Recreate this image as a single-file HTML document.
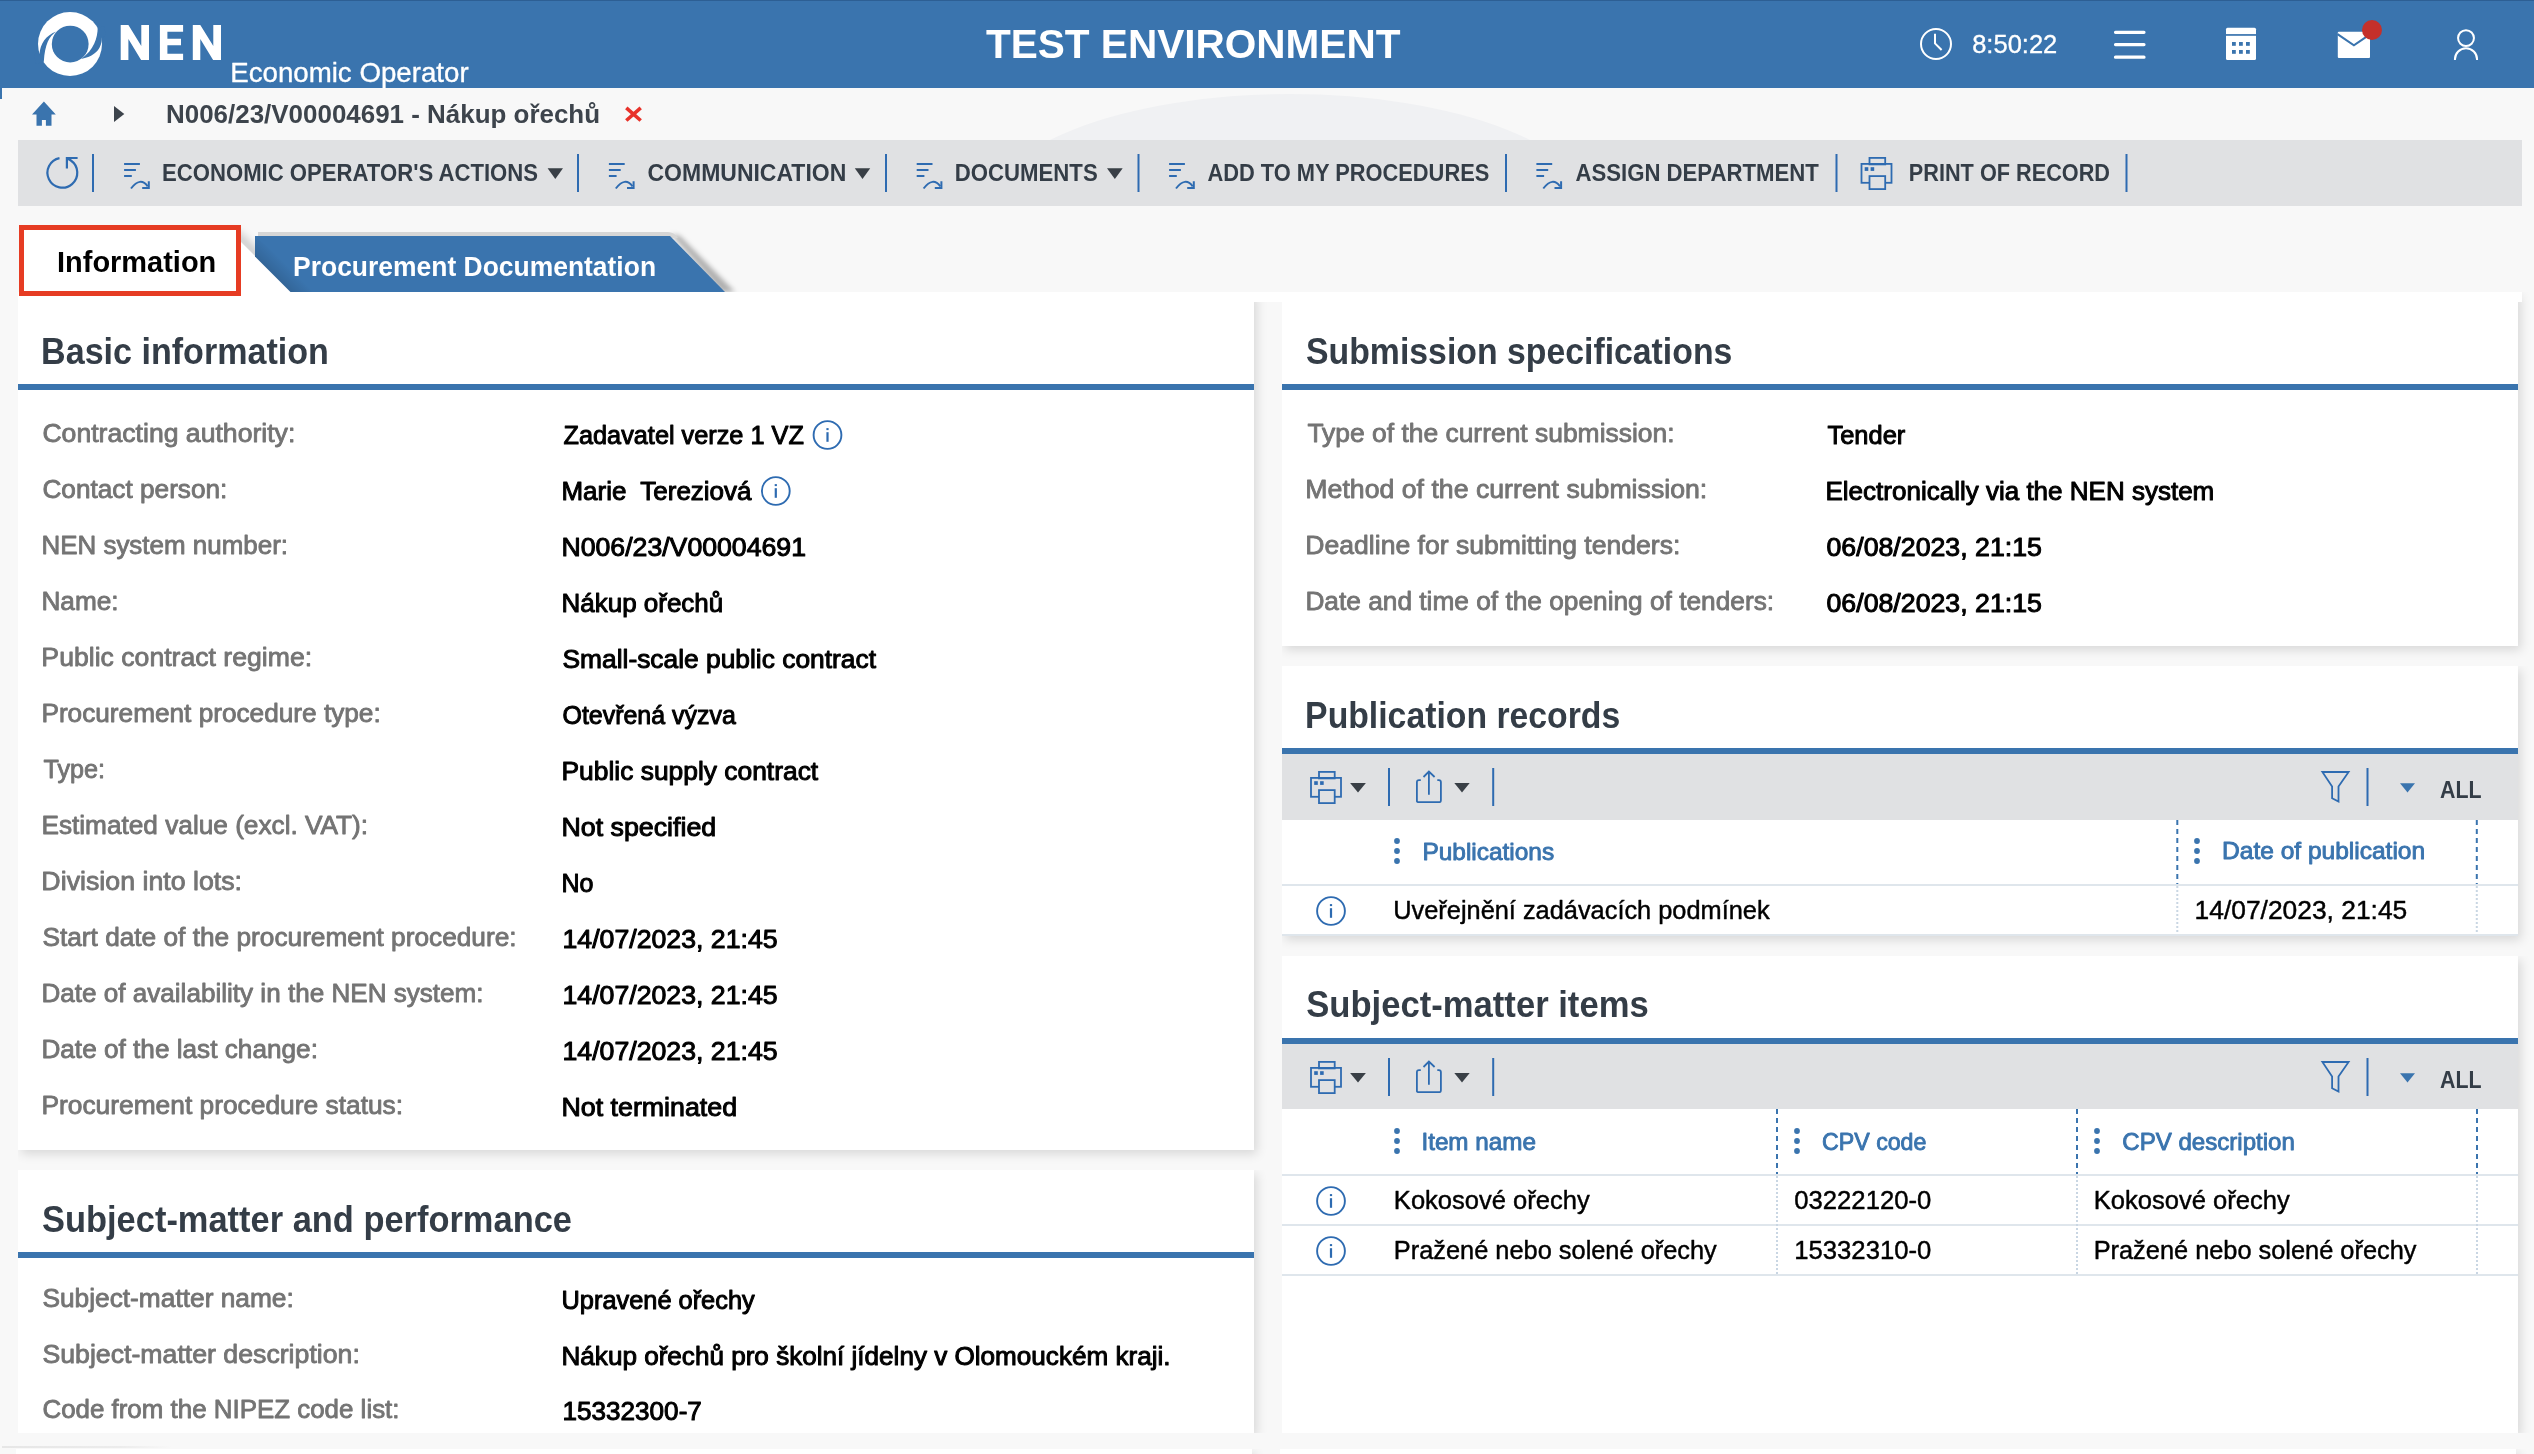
<!DOCTYPE html><html><head><meta charset="utf-8"><title>NEN</title><style>
html,body{margin:0;padding:0;width:2534px;height:1454px;overflow:hidden;background:#f8f8f8;font-family:'Liberation Sans',sans-serif}
.a{position:absolute}
#ov{position:absolute;left:0;top:0;font-family:'Liberation Sans',sans-serif;will-change:transform}
.card{position:absolute;background:#fff;box-shadow:3px 4px 10px rgba(0,0,0,0.13);clip-path:inset(0 -30px -30px 0)}
</style></head><body><div class="a" style="left:0px;top:0px;width:2534px;height:88px;background:#3a74ae"></div>
<div class="a" style="left:0px;top:0px;width:2534px;height:1px;background:#2d5f94"></div>
<div class="a" style="left:0px;top:88px;width:2px;height:11px;background:#3a74ae"></div>
<div class="a" style="left:985px;top:94px;width:610px;height:240px;border-radius:50%;background:#f0f1f3;clip-path:inset(0 0 194px 0)"></div>
<div class="a" style="left:18px;top:140px;width:2504px;height:66px;background:#e0e1e3"></div>
<div class="card" style="left:18px;top:292px;width:1236px;height:858px"></div>
<div class="card" style="left:18px;top:1170px;width:1236px;height:263px"></div>
<div class="card" style="left:1282px;top:292px;width:1236px;height:354px"></div>
<div class="card" style="left:1282px;top:666px;width:1236px;height:270px"></div>
<div class="card" style="left:1282px;top:956px;width:1236px;height:477px"></div>
<div class="a" style="left:18px;top:292px;width:2504px;height:10px;background:#fff"></div>
<div class="a" style="left:0px;top:1433px;width:2534px;height:16px;background:#f8f8f8"></div>
<div class="card" style="left:16px;top:1449px;width:1236px;height:40px"></div>
<div class="card" style="left:1280px;top:1449px;width:1236px;height:40px"></div>
<div class="a" style="left:2px;top:1446px;width:170px;height:2px;background:linear-gradient(90deg,#e6e6e6,#ececec 70%,rgba(240,240,240,0))"></div>
<div class="a" style="left:18px;top:384px;width:1236px;height:6px;background:#3a74ae"></div>
<div class="a" style="left:18px;top:1252px;width:1236px;height:6px;background:#3a74ae"></div>
<div class="a" style="left:1282px;top:384px;width:1236px;height:6px;background:#3a74ae"></div>
<div class="a" style="left:1282px;top:748px;width:1236px;height:6px;background:#3a74ae"></div>
<div class="a" style="left:1282px;top:1038px;width:1236px;height:6px;background:#3a74ae"></div>
<div class="a" style="left:1282px;top:754px;width:1236px;height:66px;background:#e0e1e3"></div>
<div class="a" style="left:1282px;top:1044px;width:1236px;height:65px;background:#e0e1e3"></div>
<div class="a" style="left:1282px;top:884px;width:1236px;height:2px;background:#dfe6ec"></div>
<div class="a" style="left:1282px;top:934px;width:1236px;height:2px;background:#dfe6ec"></div>
<div class="a" style="left:1282px;top:1174px;width:1236px;height:2px;background:#dfe6ec"></div>
<div class="a" style="left:1282px;top:1224px;width:1236px;height:2px;background:#dfe6ec"></div>
<div class="a" style="left:1282px;top:1274px;width:1236px;height:2px;background:#dfe6ec"></div><svg class="a" style="left:0;top:0" width="800" height="300"><defs><filter id="sh" x="-20%" y="-20%" width="140%" height="140%"><feGaussianBlur stdDeviation="2.5"/></filter><filter id="sh2" x="-50%" y="-50%" width="200%" height="200%"><feGaussianBlur stdDeviation="4"/></filter><linearGradient id="tg" gradientUnits="userSpaceOnUse" x1="272" y1="274" x2="284" y2="262"><stop offset="0" stop-color="#000" stop-opacity="0.13"/><stop offset="1" stop-color="#000" stop-opacity="0"/></linearGradient></defs><path d="M229,232L239,232L299,292H287Z" fill="rgba(0,0,0,0.22)" filter="url(#sh2)"/><path d="M19,232H231L291,292H19Z" fill="#fff"/><path d="M671,234L680,236L735,292H722Z" fill="rgba(0,0,0,0.30)" filter="url(#sh)"/><path d="M258,232H668Q674,232 678,238L672,238H258Z" fill="#d6d6d6"/><rect x="240" y="292" width="540" height="12" fill="#fff"/><path d="M255,236H670L725,292H290.5L255,256.5Z" fill="#3a74ae"/><path d="M255,236V256.5L290.5,292H320L255,236Z" fill="url(#tg)"/></svg><div class="a" style="left:19px;top:225px;width:222px;height:71px;background:#fff;border:5px solid #e63c23;box-sizing:border-box"></div><svg id="ov" width="2534" height="1454" font-family="Liberation Sans"><circle cx="70" cy="44" r="32" fill="#fff"/><circle cx="70.2" cy="44.1" r="18.4" fill="#3a74ae"/>
<path d="M39.6,53.7C40,44 46,35 56.4,31.4C49,36 45,44 43.8,61.7L36,64L34,54Z" fill="#3a74ae"/>
<path d="M97.7,28.1C97.5,38 94,50 81.2,58.9C97,56 102,47 101.8,37.5L106,36L104,26Z" fill="#3a74ae"/>
<path d="M120.7,25H128.4L141.3,46.1V25H149V60H141.1L128.4,39V60H120.7Z" fill="#fff"/>
<path d="M159.9,25H183.1V31.8H167.4V38.8H181V45.2H167.4V53.8H183.1V60H159.9Z" fill="#fff"/>
<path d="M192.8,25H200.3L213.3,46.1V25H221V60H213.1L200.3,39V60H192.8Z" fill="#fff"/>
<circle cx="1936" cy="44" r="15" fill="none" stroke="#fff" stroke-width="2"/><path d="M1935,33.8V43.4L1941.6,50" fill="none" stroke="#fff" stroke-width="2"/>
<path d="M2115.5,32.3H2144M2115.5,44.6H2144M2115.5,57.2H2144" stroke="#fff" stroke-width="3.2" stroke-linecap="round"/>
<rect x="2226" y="27.8" width="30" height="32.2" rx="1.5" fill="#fff"/><rect x="2226" y="34.1" width="30" height="1.7" fill="#3a74ae"/>
<rect x="2232" y="42" width="3.8" height="3.8" fill="#3a74ae"/>
<rect x="2232" y="50" width="3.8" height="3.8" fill="#3a74ae"/>
<rect x="2239" y="42" width="3.8" height="3.8" fill="#3a74ae"/>
<rect x="2239" y="50" width="3.8" height="3.8" fill="#3a74ae"/>
<rect x="2246" y="42" width="3.8" height="3.8" fill="#3a74ae"/>
<rect x="2246" y="50" width="3.8" height="3.8" fill="#3a74ae"/>
<rect x="2337.8" y="31.8" width="32.2" height="26.2" rx="1" fill="#fff"/><path d="M2337.5,34.2L2353.9,45.3L2370.3,34.2" fill="none" stroke="#3a74ae" stroke-width="2.1"/><circle cx="2372" cy="30" r="10" fill="#c4302b"/>
<circle cx="2466" cy="38.1" r="7.95" fill="none" stroke="#fff" stroke-width="2"/><path d="M2454.95,60V59.3A11.05,11.05 0 0 1 2477.05,59.3V60" fill="none" stroke="#fff" stroke-width="2"/>
<path d="M32,114.6L43.9,101.6L55.8,114.6H51.5V125.8H45.9V119.9H41.9V125.8H36.5V114.6Z" fill="#3a74ae"/>
<path d="M114,106V122L124.3,114Z" fill="#3d444c"/>
<path d="M626.3,107.8L640.7,120.5M640.7,107.8L626.3,120.5" stroke="#e8322a" stroke-width="3.6" stroke-linecap="butt"/>
<path d="M59.5,158.1A14.9,14.9 0 1 0 70.9,160.5L66.9,158M66.9,168.6V158H77.6" fill="none" stroke="#2e6bb1" stroke-width="2.2"/>
<rect x="92" y="154" width="2" height="38" fill="#2e6bb1"/>
<g transform="translate(124.1,163.9)" fill="none" stroke="#2e6bb1" stroke-width="2"><path d="M0,0H15.8M0,6.1H11.8M0,12H7.7"/><path d="M6.9,24.6Q16.25,12.45 23.6,22.4"/><path d="M24.7,17.3V24H18.1"/></g>
<path d="M547.6,168.2H563L555.3,179Z" fill="#393f46"/>
<rect x="577" y="154" width="2" height="38" fill="#2e6bb1"/>
<g transform="translate(608.9,163.9)" fill="none" stroke="#2e6bb1" stroke-width="2"><path d="M0,0H15.8M0,6.1H11.8M0,12H7.7"/><path d="M6.9,24.6Q16.25,12.45 23.6,22.4"/><path d="M24.7,17.3V24H18.1"/></g>
<path d="M854.8,168.2H870.2L862.5,179Z" fill="#393f46"/>
<rect x="885" y="154" width="2" height="38" fill="#2e6bb1"/>
<g transform="translate(916.7,163.9)" fill="none" stroke="#2e6bb1" stroke-width="2"><path d="M0,0H15.8M0,6.1H11.8M0,12H7.7"/><path d="M6.9,24.6Q16.25,12.45 23.6,22.4"/><path d="M24.7,17.3V24H18.1"/></g>
<path d="M1107,168.2H1122.7L1114.85,179Z" fill="#393f46"/>
<rect x="1137.5" y="154" width="2" height="38" fill="#2e6bb1"/>
<g transform="translate(1169.1,163.9)" fill="none" stroke="#2e6bb1" stroke-width="2"><path d="M0,0H15.8M0,6.1H11.8M0,12H7.7"/><path d="M6.9,24.6Q16.25,12.45 23.6,22.4"/><path d="M24.7,17.3V24H18.1"/></g>
<rect x="1505" y="154" width="2" height="38" fill="#2e6bb1"/>
<g transform="translate(1536.4,163.9)" fill="none" stroke="#2e6bb1" stroke-width="2"><path d="M0,0H15.8M0,6.1H11.8M0,12H7.7"/><path d="M6.9,24.6Q16.25,12.45 23.6,22.4"/><path d="M24.7,17.3V24H18.1"/></g>
<rect x="1835.5" y="154" width="2" height="38" fill="#2e6bb1"/>
<g transform="translate(1860.6,157) scale(1.0)" fill="none" stroke="#2e6bb1" stroke-width="1.8"><rect x="8.9" y="0.9" width="15.7" height="6.5"/><rect x="0.9" y="6.9" width="30" height="18.9"/><rect x="8.9" y="19.1" width="15.7" height="13" fill="#e0e1e3"/><rect x="4.1" y="10.2" width="3.6" height="3.7" fill="#2e6bb1" stroke="none"/><rect x="10" y="10.2" width="3.6" height="3.7" fill="#2e6bb1" stroke="none"/></g>
<rect x="2125.5" y="154" width="2" height="38" fill="#2e6bb1"/>
<circle cx="827.5" cy="435" r="13.9" fill="none" stroke="#2e6bb1" stroke-width="1.9"/><rect x="826.4" y="428.1" width="2.2" height="2" fill="#2e6bb1"/><rect x="826.4" y="432.2" width="2.2" height="9.6" fill="#2e6bb1"/>
<circle cx="775.8" cy="491" r="13.9" fill="none" stroke="#2e6bb1" stroke-width="1.9"/><rect x="774.6999999999999" y="484.1" width="2.2" height="2" fill="#2e6bb1"/><rect x="774.6999999999999" y="488.2" width="2.2" height="9.6" fill="#2e6bb1"/>
<g transform="translate(1310.1,771) scale(1.0)" fill="none" stroke="#2e6bb1" stroke-width="1.8"><rect x="8.9" y="0.9" width="15.7" height="6.5"/><rect x="0.9" y="6.9" width="30" height="18.9"/><rect x="8.9" y="19.1" width="15.7" height="13" fill="#e0e1e3"/><rect x="4.1" y="10.2" width="3.6" height="3.7" fill="#2e6bb1" stroke="none"/><rect x="10" y="10.2" width="3.6" height="3.7" fill="#2e6bb1" stroke="none"/></g><path d="M1350.1,782.9H1365.9L1358.0,792.4Z" fill="#393f46"/><rect x="1388" y="768" width="2" height="38" fill="#2e6bb1"/><g transform="translate(1416,771)" fill="none" stroke="#2e6bb1" stroke-width="1.8"><path d="M4.8,9.2H3Q0.9,9.2 0.9,11.3V29.9Q0.9,31.1 3,31.1H23.7Q24.9,31.1 24.9,29V11.3Q24.9,9.2 22.8,9.2H21.3"/><path d="M12.9,1.2V23.7M7.5,6L12.9,0.6L18.6,6"/></g><path d="M1454.3,782.9H1469.7L1462.0,792.4Z" fill="#393f46"/><rect x="1492.2" y="768" width="2" height="38" fill="#2e6bb1"/><path transform="translate(2322,772)" d="M0.4,0H26.6L16.5,14.6V29.6L10.1,26.2V14.6Z" fill="none" stroke="#2e6bb1" stroke-width="1.8" stroke-linejoin="miter"/><rect x="2366.5" y="768" width="2" height="38" fill="#2e6bb1"/><path d="M2400,783.2H2415L2407.5,792.6Z" fill="#3a74ae"/>
<g transform="translate(1310.1,1061) scale(1.0)" fill="none" stroke="#2e6bb1" stroke-width="1.8"><rect x="8.9" y="0.9" width="15.7" height="6.5"/><rect x="0.9" y="6.9" width="30" height="18.9"/><rect x="8.9" y="19.1" width="15.7" height="13" fill="#e0e1e3"/><rect x="4.1" y="10.2" width="3.6" height="3.7" fill="#2e6bb1" stroke="none"/><rect x="10" y="10.2" width="3.6" height="3.7" fill="#2e6bb1" stroke="none"/></g><path d="M1350.1,1072.9H1365.9L1358.0,1082.4Z" fill="#393f46"/><rect x="1388" y="1058" width="2" height="38" fill="#2e6bb1"/><g transform="translate(1416,1061)" fill="none" stroke="#2e6bb1" stroke-width="1.8"><path d="M4.8,9.2H3Q0.9,9.2 0.9,11.3V29.9Q0.9,31.1 3,31.1H23.7Q24.9,31.1 24.9,29V11.3Q24.9,9.2 22.8,9.2H21.3"/><path d="M12.9,1.2V23.7M7.5,6L12.9,0.6L18.6,6"/></g><path d="M1454.3,1072.9H1469.7L1462.0,1082.4Z" fill="#393f46"/><rect x="1492.2" y="1058" width="2" height="38" fill="#2e6bb1"/><path transform="translate(2322,1062)" d="M0.4,0H26.6L16.5,14.6V29.6L10.1,26.2V14.6Z" fill="none" stroke="#2e6bb1" stroke-width="1.8" stroke-linejoin="miter"/><rect x="2366.5" y="1058" width="2" height="38" fill="#2e6bb1"/><path d="M2400,1073.2H2415L2407.5,1082.6Z" fill="#3a74ae"/>
<circle cx="1397" cy="841" r="2.9" fill="#3a74ae"/><circle cx="1397" cy="851" r="2.9" fill="#3a74ae"/><circle cx="1397" cy="861" r="2.9" fill="#3a74ae"/>
<circle cx="2197" cy="841" r="2.9" fill="#3a74ae"/><circle cx="2197" cy="851" r="2.9" fill="#3a74ae"/><circle cx="2197" cy="861" r="2.9" fill="#3a74ae"/>
<circle cx="1331" cy="911" r="13.9" fill="none" stroke="#2e6bb1" stroke-width="1.9"/><rect x="1329.9" y="904.1" width="2.2" height="2" fill="#2e6bb1"/><rect x="1329.9" y="908.2" width="2.2" height="9.6" fill="#2e6bb1"/>
<circle cx="1397" cy="1131" r="2.9" fill="#3a74ae"/><circle cx="1397" cy="1141" r="2.9" fill="#3a74ae"/><circle cx="1397" cy="1151" r="2.9" fill="#3a74ae"/>
<circle cx="1797" cy="1131" r="2.9" fill="#3a74ae"/><circle cx="1797" cy="1141" r="2.9" fill="#3a74ae"/><circle cx="1797" cy="1151" r="2.9" fill="#3a74ae"/>
<circle cx="2097" cy="1131" r="2.9" fill="#3a74ae"/><circle cx="2097" cy="1141" r="2.9" fill="#3a74ae"/><circle cx="2097" cy="1151" r="2.9" fill="#3a74ae"/>
<circle cx="1331" cy="1201" r="13.9" fill="none" stroke="#2e6bb1" stroke-width="1.9"/><rect x="1329.9" y="1194.1" width="2.2" height="2" fill="#2e6bb1"/><rect x="1329.9" y="1198.2" width="2.2" height="9.6" fill="#2e6bb1"/>
<circle cx="1331" cy="1251" r="13.9" fill="none" stroke="#2e6bb1" stroke-width="1.9"/><rect x="1329.9" y="1244.1" width="2.2" height="2" fill="#2e6bb1"/><rect x="1329.9" y="1248.2" width="2.2" height="9.6" fill="#2e6bb1"/>
<path d="M2177.3,820V884" stroke="#3a74ae" stroke-width="2" stroke-dasharray="5,4"/>
<path d="M2177.3,886V934" stroke="#c9d6e3" stroke-width="2" stroke-dasharray="2,2"/>
<path d="M2476.8,820V884" stroke="#3a74ae" stroke-width="2" stroke-dasharray="5,4"/>
<path d="M2476.8,886V934" stroke="#c9d6e3" stroke-width="2" stroke-dasharray="2,2"/>
<path d="M1777,1109V1174" stroke="#3a74ae" stroke-width="2" stroke-dasharray="5,4"/>
<path d="M1777,1176V1274" stroke="#c9d6e3" stroke-width="2" stroke-dasharray="2,2"/>
<path d="M2077,1109V1174" stroke="#3a74ae" stroke-width="2" stroke-dasharray="5,4"/>
<path d="M2077,1176V1274" stroke="#c9d6e3" stroke-width="2" stroke-dasharray="2,2"/>
<path d="M2477,1109V1174" stroke="#3a74ae" stroke-width="2" stroke-dasharray="5,4"/>
<path d="M2477,1176V1274" stroke="#c9d6e3" stroke-width="2" stroke-dasharray="2,2"/>
<text x="230.20" y="82.2" font-size="28" fill="#fff" stroke="#fff" stroke-width="0.35" stroke-linejoin="round" textLength="238.45" lengthAdjust="spacingAndGlyphs">Economic Operator</text>
<text x="986.00" y="58.0" font-size="40" font-weight="bold" fill="#fff" textLength="414.44" lengthAdjust="spacingAndGlyphs">TEST ENVIRONMENT</text>
<text x="1972.19" y="53.0" font-size="26" fill="#fff" stroke="#fff" stroke-width="0.35" stroke-linejoin="round" textLength="85.09" lengthAdjust="spacingAndGlyphs">8:50:22</text>
<text x="166.00" y="123.2" font-size="26" font-weight="bold" fill="#3d444c" textLength="434.08" lengthAdjust="spacingAndGlyphs">N006/23/V00004691 - Nákup ořechů</text>
<text x="162.08" y="181.0" font-size="24" font-weight="bold" fill="#343d47" textLength="375.93" lengthAdjust="spacingAndGlyphs">ECONOMIC OPERATOR'S ACTIONS</text>
<text x="647.50" y="181.0" font-size="24" font-weight="bold" fill="#343d47" textLength="198.78" lengthAdjust="spacingAndGlyphs">COMMUNICATION</text>
<text x="954.78" y="181.0" font-size="24" font-weight="bold" fill="#343d47" textLength="142.93" lengthAdjust="spacingAndGlyphs">DOCUMENTS</text>
<text x="1207.40" y="181.0" font-size="24" font-weight="bold" fill="#343d47" textLength="281.91" lengthAdjust="spacingAndGlyphs">ADD TO MY PROCEDURES</text>
<text x="1575.40" y="181.0" font-size="24" font-weight="bold" fill="#343d47" textLength="243.49" lengthAdjust="spacingAndGlyphs">ASSIGN DEPARTMENT</text>
<text x="1908.80" y="181.0" font-size="24" font-weight="bold" fill="#343d47" textLength="201.20" lengthAdjust="spacingAndGlyphs">PRINT OF RECORD</text>
<text x="57.07" y="272.0" font-size="30" font-weight="bold" fill="#000" textLength="159.21" lengthAdjust="spacingAndGlyphs">Information</text>
<text x="293.06" y="276.0" font-size="28" font-weight="bold" fill="#fff" textLength="362.99" lengthAdjust="spacingAndGlyphs">Procurement Documentation</text>
<text x="41.11" y="364.3" font-size="36" font-weight="bold" fill="#343d47" textLength="287.78" lengthAdjust="spacingAndGlyphs">Basic information</text>
<text x="42.41" y="442.0" font-size="26" fill="#747474" stroke="#747474" stroke-width="0.85" stroke-linejoin="round" textLength="252.93" lengthAdjust="spacingAndGlyphs">Contracting authority:</text>
<text x="42.42" y="498.0" font-size="26" fill="#747474" stroke="#747474" stroke-width="0.85" stroke-linejoin="round" textLength="184.99" lengthAdjust="spacingAndGlyphs">Contact person:</text>
<text x="41.43" y="554.0" font-size="26" fill="#747474" stroke="#747474" stroke-width="0.85" stroke-linejoin="round" textLength="246.57" lengthAdjust="spacingAndGlyphs">NEN system number:</text>
<text x="41.41" y="610.0" font-size="26" fill="#747474" stroke="#747474" stroke-width="0.85" stroke-linejoin="round" textLength="77.20" lengthAdjust="spacingAndGlyphs">Name:</text>
<text x="41.39" y="666.0" font-size="26" fill="#747474" stroke="#747474" stroke-width="0.85" stroke-linejoin="round" textLength="270.75" lengthAdjust="spacingAndGlyphs">Public contract regime:</text>
<text x="41.41" y="722.0" font-size="26" fill="#747474" stroke="#747474" stroke-width="0.85" stroke-linejoin="round" textLength="339.30" lengthAdjust="spacingAndGlyphs">Procurement procedure type:</text>
<text x="43.41" y="778.0" font-size="26" fill="#747474" stroke="#747474" stroke-width="0.85" stroke-linejoin="round" textLength="61.53" lengthAdjust="spacingAndGlyphs">Type:</text>
<text x="41.41" y="834.0" font-size="26" fill="#747474" stroke="#747474" stroke-width="0.85" stroke-linejoin="round" textLength="326.70" lengthAdjust="spacingAndGlyphs">Estimated value (excl. VAT):</text>
<text x="41.38" y="890.0" font-size="26" fill="#747474" stroke="#747474" stroke-width="0.85" stroke-linejoin="round" textLength="200.67" lengthAdjust="spacingAndGlyphs">Division into lots:</text>
<text x="42.42" y="946.0" font-size="26" fill="#747474" stroke="#747474" stroke-width="0.85" stroke-linejoin="round" textLength="474.20" lengthAdjust="spacingAndGlyphs">Start date of the procurement procedure:</text>
<text x="41.42" y="1002.0" font-size="26" fill="#747474" stroke="#747474" stroke-width="0.85" stroke-linejoin="round" textLength="442.18" lengthAdjust="spacingAndGlyphs">Date of availability in the NEN system:</text>
<text x="41.41" y="1058.0" font-size="26" fill="#747474" stroke="#747474" stroke-width="0.85" stroke-linejoin="round" textLength="276.50" lengthAdjust="spacingAndGlyphs">Date of the last change:</text>
<text x="41.40" y="1114.0" font-size="26" fill="#747474" stroke="#747474" stroke-width="0.85" stroke-linejoin="round" textLength="361.72" lengthAdjust="spacingAndGlyphs">Procurement procedure status:</text>
<text x="563.49" y="444.0" font-size="26" fill="#000" stroke="#000" stroke-width="1.0" stroke-linejoin="round" textLength="240.41" lengthAdjust="spacingAndGlyphs">Zadavatel verze 1 VZ</text>
<text x="561.51" y="500.0" font-size="26" fill="#000" stroke="#000" stroke-width="1.0" stroke-linejoin="round" textLength="189.96" lengthAdjust="spacingAndGlyphs">Marie  Tereziová</text>
<text x="561.46" y="556.0" font-size="26" fill="#000" stroke="#000" stroke-width="1.0" stroke-linejoin="round" textLength="244.50" lengthAdjust="spacingAndGlyphs">N006/23/V00004691</text>
<text x="561.50" y="612.0" font-size="26" fill="#000" stroke="#000" stroke-width="1.0" stroke-linejoin="round" textLength="161.76" lengthAdjust="spacingAndGlyphs">Nákup ořechů</text>
<text x="562.49" y="668.0" font-size="26" fill="#000" stroke="#000" stroke-width="1.0" stroke-linejoin="round" textLength="313.51" lengthAdjust="spacingAndGlyphs">Small-scale public contract</text>
<text x="562.52" y="724.0" font-size="26" fill="#000" stroke="#000" stroke-width="1.0" stroke-linejoin="round" textLength="173.28" lengthAdjust="spacingAndGlyphs">Otevřená výzva</text>
<text x="561.48" y="780.0" font-size="26" fill="#000" stroke="#000" stroke-width="1.0" stroke-linejoin="round" textLength="256.73" lengthAdjust="spacingAndGlyphs">Public supply contract</text>
<text x="561.46" y="836.0" font-size="26" fill="#000" stroke="#000" stroke-width="1.0" stroke-linejoin="round" textLength="154.73" lengthAdjust="spacingAndGlyphs">Not specified</text>
<text x="561.56" y="892.0" font-size="26" fill="#000" stroke="#000" stroke-width="1.0" stroke-linejoin="round" textLength="32.01" lengthAdjust="spacingAndGlyphs">No</text>
<text x="562.49" y="948.0" font-size="26" fill="#000" stroke="#000" stroke-width="1.0" stroke-linejoin="round" textLength="215.07" lengthAdjust="spacingAndGlyphs">14/07/2023, 21:45</text>
<text x="562.49" y="1004.0" font-size="26" fill="#000" stroke="#000" stroke-width="1.0" stroke-linejoin="round" textLength="215.07" lengthAdjust="spacingAndGlyphs">14/07/2023, 21:45</text>
<text x="562.49" y="1060.0" font-size="26" fill="#000" stroke="#000" stroke-width="1.0" stroke-linejoin="round" textLength="215.07" lengthAdjust="spacingAndGlyphs">14/07/2023, 21:45</text>
<text x="561.46" y="1116.0" font-size="26" fill="#000" stroke="#000" stroke-width="1.0" stroke-linejoin="round" textLength="175.63" lengthAdjust="spacingAndGlyphs">Not terminated</text>
<text x="42.04" y="1232.2" font-size="36" font-weight="bold" fill="#343d47" textLength="529.93" lengthAdjust="spacingAndGlyphs">Subject-matter and performance</text>
<text x="42.42" y="1307.0" font-size="26" fill="#747474" stroke="#747474" stroke-width="0.85" stroke-linejoin="round" textLength="251.40" lengthAdjust="spacingAndGlyphs">Subject-matter name:</text>
<text x="42.41" y="1362.6" font-size="26" fill="#747474" stroke="#747474" stroke-width="0.85" stroke-linejoin="round" textLength="317.44" lengthAdjust="spacingAndGlyphs">Subject-matter description:</text>
<text x="42.43" y="1418.0" font-size="26" fill="#747474" stroke="#747474" stroke-width="0.85" stroke-linejoin="round" textLength="357.07" lengthAdjust="spacingAndGlyphs">Code from the NIPEZ code list:</text>
<text x="561.54" y="1309.0" font-size="26" fill="#000" stroke="#000" stroke-width="1.0" stroke-linejoin="round" textLength="193.18" lengthAdjust="spacingAndGlyphs">Upravené ořechy</text>
<text x="561.49" y="1365.0" font-size="26" fill="#000" stroke="#000" stroke-width="1.0" stroke-linejoin="round" textLength="609.03" lengthAdjust="spacingAndGlyphs">Nákup ořechů pro školní jídelny v Olomouckém kraji.</text>
<text x="562.50" y="1420.0" font-size="26" fill="#000" stroke="#000" stroke-width="1.0" stroke-linejoin="round" textLength="139.36" lengthAdjust="spacingAndGlyphs">15332300-7</text>
<text x="1306.06" y="364.3" font-size="36" font-weight="bold" fill="#343d47" textLength="426.30" lengthAdjust="spacingAndGlyphs">Submission specifications</text>
<text x="1307.43" y="442.0" font-size="26" fill="#747474" stroke="#747474" stroke-width="0.85" stroke-linejoin="round" textLength="367.10" lengthAdjust="spacingAndGlyphs">Type of the current submission:</text>
<text x="1305.38" y="498.0" font-size="26" fill="#747474" stroke="#747474" stroke-width="0.85" stroke-linejoin="round" textLength="401.86" lengthAdjust="spacingAndGlyphs">Method of the current submission:</text>
<text x="1305.39" y="554.0" font-size="26" fill="#747474" stroke="#747474" stroke-width="0.85" stroke-linejoin="round" textLength="374.95" lengthAdjust="spacingAndGlyphs">Deadline for submitting tenders:</text>
<text x="1305.41" y="610.0" font-size="26" fill="#747474" stroke="#747474" stroke-width="0.85" stroke-linejoin="round" textLength="468.71" lengthAdjust="spacingAndGlyphs">Date and time of the opening of tenders:</text>
<text x="1827.49" y="444.0" font-size="26" fill="#000" stroke="#000" stroke-width="1.0" stroke-linejoin="round" textLength="77.79" lengthAdjust="spacingAndGlyphs">Tender</text>
<text x="1825.50" y="500.0" font-size="26" fill="#000" stroke="#000" stroke-width="1.0" stroke-linejoin="round" textLength="388.76" lengthAdjust="spacingAndGlyphs">Electronically via the NEN system</text>
<text x="1826.49" y="556.0" font-size="26" fill="#000" stroke="#000" stroke-width="1.0" stroke-linejoin="round" textLength="215.47" lengthAdjust="spacingAndGlyphs">06/08/2023, 21:15</text>
<text x="1826.49" y="612.0" font-size="26" fill="#000" stroke="#000" stroke-width="1.0" stroke-linejoin="round" textLength="215.47" lengthAdjust="spacingAndGlyphs">06/08/2023, 21:15</text>
<text x="1305.12" y="727.9" font-size="36" font-weight="bold" fill="#343d47" textLength="315.13" lengthAdjust="spacingAndGlyphs">Publication records</text>
<text x="2440.10" y="797.9" font-size="24" font-weight="bold" fill="#343d47" textLength="41.49" lengthAdjust="spacingAndGlyphs">ALL</text>
<text x="1422.44" y="859.7" font-size="24" fill="#3a74ae" stroke="#3a74ae" stroke-width="0.9" stroke-linejoin="round" textLength="131.70" lengthAdjust="spacingAndGlyphs">Publications</text>
<text x="2222.14" y="858.7" font-size="24" fill="#3a74ae" stroke="#3a74ae" stroke-width="0.9" stroke-linejoin="round" textLength="202.98" lengthAdjust="spacingAndGlyphs">Date of publication</text>
<text x="1393.27" y="919.2" font-size="26" fill="#000" stroke="#000" stroke-width="0.45" stroke-linejoin="round" textLength="376.34" lengthAdjust="spacingAndGlyphs">Uveřejnění zadávacích podmínek</text>
<text x="2194.61" y="918.8" font-size="26" fill="#000" stroke="#000" stroke-width="0.45" stroke-linejoin="round" textLength="212.62" lengthAdjust="spacingAndGlyphs">14/07/2023, 21:45</text>
<text x="1306.24" y="1017.3" font-size="36" font-weight="bold" fill="#343d47" textLength="342.44" lengthAdjust="spacingAndGlyphs">Subject-matter items</text>
<text x="2440.10" y="1087.9" font-size="24" font-weight="bold" fill="#343d47" textLength="41.49" lengthAdjust="spacingAndGlyphs">ALL</text>
<text x="1421.44" y="1150.0" font-size="24" fill="#3a74ae" stroke="#3a74ae" stroke-width="0.9" stroke-linejoin="round" textLength="114.46" lengthAdjust="spacingAndGlyphs">Item name</text>
<text x="1822.07" y="1149.5" font-size="24" fill="#3a74ae" stroke="#3a74ae" stroke-width="0.9" stroke-linejoin="round" textLength="104.33" lengthAdjust="spacingAndGlyphs">CPV code</text>
<text x="2122.35" y="1149.5" font-size="24" fill="#3a74ae" stroke="#3a74ae" stroke-width="0.9" stroke-linejoin="round" textLength="172.45" lengthAdjust="spacingAndGlyphs">CPV description</text>
<text x="1393.86" y="1209.1" font-size="26" fill="#000" stroke="#000" stroke-width="0.45" stroke-linejoin="round" textLength="195.92" lengthAdjust="spacingAndGlyphs">Kokosové ořechy</text>
<text x="1794.34" y="1209.1" font-size="26" fill="#000" stroke="#000" stroke-width="0.45" stroke-linejoin="round" textLength="136.90" lengthAdjust="spacingAndGlyphs">03222120-0</text>
<text x="2093.65" y="1209.1" font-size="26" fill="#000" stroke="#000" stroke-width="0.45" stroke-linejoin="round" textLength="196.12" lengthAdjust="spacingAndGlyphs">Kokosové ořechy</text>
<text x="1393.87" y="1259.1" font-size="26" fill="#000" stroke="#000" stroke-width="0.45" stroke-linejoin="round" textLength="322.91" lengthAdjust="spacingAndGlyphs">Pražené nebo solené ořechy</text>
<text x="1794.34" y="1259.1" font-size="26" fill="#000" stroke="#000" stroke-width="0.45" stroke-linejoin="round" textLength="136.90" lengthAdjust="spacingAndGlyphs">15332310-0</text>
<text x="2093.67" y="1259.1" font-size="26" fill="#000" stroke="#000" stroke-width="0.45" stroke-linejoin="round" textLength="322.81" lengthAdjust="spacingAndGlyphs">Pražené nebo solené ořechy</text></svg></body></html>
